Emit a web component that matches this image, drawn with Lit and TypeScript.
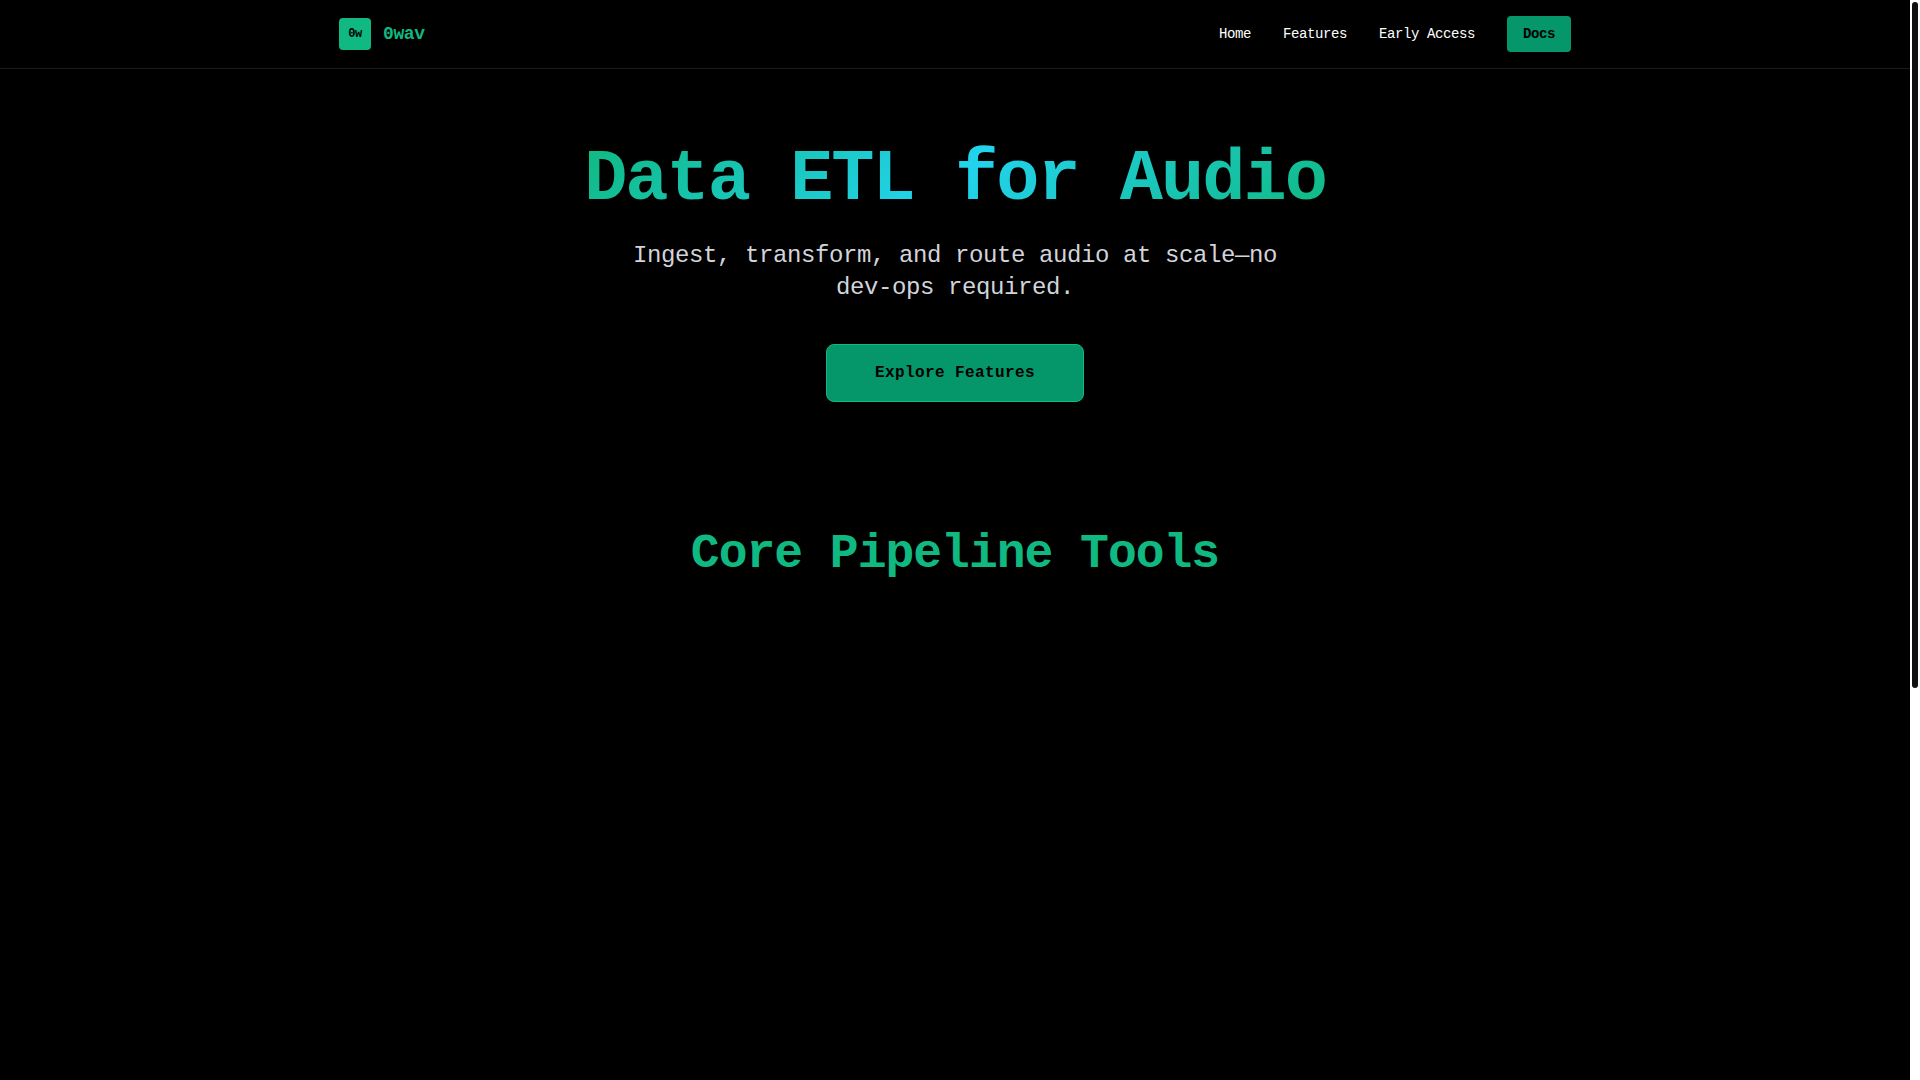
import { LitElement, html, css } from "lit";
import { customElement } from "lit/decorators.js";

interface NavLink {
  label: string;
  href: string;
}

const NAV_LINKS: NavLink[] = [
  { label: "Home", href: "#home" },
  { label: "Features", href: "#features" },
  { label: "Early Access", href: "#early-access" },
];

@customElement("site-header")
export class SiteHeader extends LitElement {
  static styles = css`
    :host {
      display: block;
      border-bottom: 1px solid #1a1a1a;
      background: #000;
    }
    .bar {
      display: flex;
      align-items: center;
      justify-content: space-between;
      box-sizing: border-box;
      max-width: 1280px;
      margin: 0 auto;
      padding: 16px 24px;
    }
    .brand {
      display: flex;
      align-items: center;
      gap: 12px;
      color: #10b981;
      font-size: 18px;
      font-weight: 700;
      line-height: 28px;
      text-decoration: none;
    }
    .mark {
      display: flex;
      align-items: center;
      justify-content: center;
      width: 32px;
      height: 32px;
      border-radius: 4px;
      background: #10b981;
      color: #000;
      font-size: 12px;
      line-height: 16px;
    }
    .links {
      display: flex;
      align-items: center;
      gap: 32px;
      font-size: 14px;
      line-height: 20px;
    }
    .link {
      color: #fff;
      text-decoration: none;
    }
    .docs {
      padding: 8px 16px;
      border-radius: 4px;
      background: #059669;
      color: #000;
      font-weight: 700;
      text-decoration: none;
    }
  `;

  render() {
    return html`
      <header class="bar">
        <a class="brand" href="#home"><span class="mark">0w</span><span>0wav</span></a>
        <nav class="links">
          ${NAV_LINKS.map((l) => html`<a class="link" href=${l.href}>${l.label}</a>`)}
          <a class="docs" href="#docs">Docs</a>
        </nav>
      </header>
    `;
  }
}

@customElement("app-root")
export class AppRoot extends LitElement {
  static styles = css`
    :host {
      display: flex;
      height: 100vh;
      background: #000;
      color: #fff;
      font-family: "Liberation Mono", monospace;
      font-size: 16px;
      line-height: 24px;
      letter-spacing: -0.025em;
    }
    .page {
      flex: 1;
      min-width: 0;
      overflow-y: auto;
      scrollbar-width: none;
    }
    .track {
      flex: none;
      box-sizing: border-box;
      width: 10px;
      padding: 2px;
      background: #fff;
    }
    .thumb {
      height: calc(64% - 3px);
      border-radius: 3px;
      background: #111;
    }
    .hero {
      display: flex;
      flex-direction: column;
      align-items: center;
      padding: 75px 24px 64px;
      text-align: center;
    }
    .title {
      margin: 0 0 24px;
      background: linear-gradient(135deg, #10b981 0%, #22d3ee 50%, #10b981 100%);
      -webkit-background-clip: text;
      background-clip: text;
      color: transparent;
      font-size: 72px;
      font-weight: 700;
      line-height: 72px;
      letter-spacing: -2px;
    }
    .lead {
      max-width: 672px;
      margin: 0 0 40px;
      color: #d1d5db;
      font-size: 24px;
      line-height: 32px;
    }
    .cta {
      padding: 16px 48px;
      border: 1px solid #10b981;
      border-radius: 8px;
      background: #059669;
      color: #000;
      font-weight: 700;
      letter-spacing: 0.025em;
      text-decoration: none;
    }
    .features {
      min-height: 100vh;
      padding: 64px 24px;
      text-align: center;
    }
    .heading {
      margin: 0;
      color: #10b981;
      font-size: 48px;
      font-weight: 700;
      line-height: 48px;
      letter-spacing: -1px;
    }
  `;

  render() {
    return html`
      <div class="page">
        <site-header></site-header>
        <main>
          <section class="hero" id="home">
            <h1 class="title">Data ETL for Audio</h1>
            <p class="lead">Ingest, transform, and route audio at scale—no dev-ops required.</p>
            <a class="cta" href="#features">Explore Features</a>
          </section>
          <section class="features" id="features">
            <h2 class="heading">Core Pipeline Tools</h2>
          </section>
        </main>
      </div>
      <div class="track" aria-hidden="true"><div class="thumb"></div></div>
    `;
  }
}
